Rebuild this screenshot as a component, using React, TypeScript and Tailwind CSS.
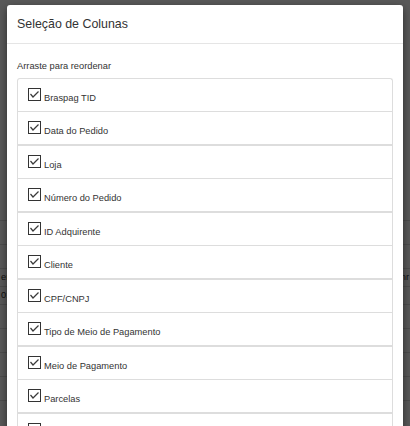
import React from "react"

const columns = [
  "Braspag TID",
  "Data do Pedido",
  "Loja",
  "Número do Pedido",
  "ID Adquirente",
  "Cliente",
  "CPF/CNPJ",
  "Tipo de Meio de Pagamento",
  "Meio de Pagamento",
  "Parcelas",
  "Valor",
]

const bgRows = [
  { y: "h-[24px]", left: "", right: "" },
  { y: "h-[24px]", left: "", right: "" },
  { y: "h-[24px]", left: "", right: "" },
  { y: "h-[18px]", left: "en", right: "nr" },
  { y: "h-[18px]", left: "0:", right: "" },
  { y: "h-[24px]", left: "", right: "" },
  { y: "h-[24px]", left: "", right: "" },
  { y: "h-[24px]", left: "", right: "" },
  { y: "h-[24px]", left: "", right: "" },
]

function CheckBox() {
  return (
    <svg width="13" height="13" viewBox="0 0 13 13" className="shrink-0">
      <rect x="0.5" y="0.5" width="12" height="12" fill="#fff" stroke="#333" />
      <polyline points="2.5,6 5,9 10.5,3.5" fill="none" stroke="#3a3a3a" strokeWidth="1.2" />
    </svg>
  )
}

export default function App() {
  return (
    <div className="relative h-[426px] w-[410px] overflow-hidden bg-white font-['Liberation_Sans',Arial,sans-serif]">
      {/* page behind the modal */}
      <div className="pt-[197px] text-[9.3px] text-[#333]">
        {bgRows.map((row, i) => (
          <div key={i} className={`${row.y} flex items-center justify-between border-b border-[#ddd] px-[1px]`}>
            <span>{row.left}</span>
            <span>{row.right}</span>
          </div>
        ))}
      </div>

      {/* backdrop */}
      <div className="absolute inset-0 bg-black/65" />

      {/* modal */}
      <div className="absolute left-[7px] top-[5px] w-[396px] rounded-[3px] bg-white shadow-[0_3px_9px_rgba(0,0,0,0.5)]">
        <div className="flex h-[39px] items-center border-b border-[#e5e5e5] px-[10px] pt-[1px]">
          <h4 className="text-[12.4px] text-[#333]">Seleção de Colunas</h4>
        </div>

        <div className="px-[10px] pt-[17px]">
          <p className="mb-[7px] text-[9.3px] leading-[10px] text-[#333]">Arraste para reordenar</p>

          <div className="rounded-[3px] border-x border-t border-[#ddd]">
            {columns.map((name, i) => (
              <div
                key={name}
                className={`flex items-start pl-[10px] pt-[9px] ${
                  i % 2 === 0 ? "h-[33px] border-b border-[#ddd]" : "h-[34px] border-b-2 border-[#ddd]"
                }`}
              >
                <CheckBox />
                <span className="ml-[3px] mt-[5px] text-[9.3px] leading-[10px] text-[#333]">{name}</span>
              </div>
            ))}
          </div>
        </div>
      </div>
    </div>
  )
}
